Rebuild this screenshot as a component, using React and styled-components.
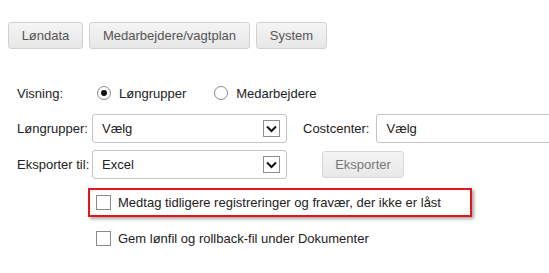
import styled, {createGlobalStyle} from "styled-components";

const GlobalStyle = createGlobalStyle`
  body {
    margin: 0;
    background: #fff;
    font-family: "Liberation Sans", Arial, sans-serif;
    font-size: 13px;
    color: #222;
  }
`

const Page = styled.div`
  width: 549px;
  height: 273px;
  overflow: hidden;
`

const TabBar = styled.div`
  display: flex;
  gap: 6px;
  padding: 22px 0 0 8px;
`

const TabButton = styled.button`
  width: ${({w}) => w}px;
  height: 27px;
  padding: 0;
  border: 1px solid #d2d2d2;
  border-radius: 3px;
  background: linear-gradient(#f5f5f5, #e6e6e6);
  color: #555;
  font-family: inherit;
  font-size: 13px;
`

const Form = styled.div`
  padding: 34px 0 0 17px;
  display: flex;
  flex-direction: column;
  align-items: flex-start;
`

const Row = styled.div`
  display: flex;
  align-items: center;
  height: ${({h}) => h || 29}px;
  margin-top: ${({mt}) => mt || 0}px;
`

const Label = styled.span`
  width: ${({w}) => w || 75}px;
  flex-shrink: 0;
  color: #222;
`

const RadioOption = styled.label`
  display: flex;
  align-items: center;
  gap: 8px;
  margin-left: ${({ml}) => ml || 0}px;
`

const RadioCircle = styled.span`
  width: 12px;
  height: 12px;
  border-radius: 50%;
  border: 1px solid #8a8a8a;
  background: #fff;
  display: flex;
  align-items: center;
  justify-content: center;

  &::after {
    content: "";
    width: 6px;
    height: 6px;
    border-radius: 50%;
    background: ${({checked}) => (checked ? "#111" : "transparent")};
  }
`

const SelectBox = styled.div`
  width: ${({w}) => w}px;
  height: 29px;
  box-sizing: border-box;
  border: 1px solid #c4c4c4;
  border-radius: 3px;
  display: flex;
  align-items: center;
  justify-content: space-between;
  padding: 0 6px 0 9px;
  background: #fff;
  color: #222;
  flex-shrink: 0;
`

const DropArrow = styled.span`
  width: 15px;
  height: 15px;
  border: 1px solid #8f8f8f;
  background: #fff;
  display: flex;
  align-items: center;
  justify-content: center;
`

const InlineLabel = styled.span`
  margin: 0 7px 0 16px;
`

const ActionButton = styled.button`
  margin-left: 35px;
  width: 82px;
  height: 27px;
  padding: 0;
  border: 1px solid #d8d8d8;
  border-radius: 3px;
  background: linear-gradient(#f4f4f4, #e8e8e8);
  color: #777;
  font-family: inherit;
  font-size: 13px;
`

const CheckRow = styled.label`
  display: flex;
  align-items: center;
  gap: 7px;
  box-sizing: border-box;
  margin-left: ${({boxed}) => (boxed ? 71 : 79)}px;
  width: ${({boxed}) => (boxed ? "384px" : "auto")};
  height: 29px;
  padding-left: ${({boxed}) => (boxed ? 6 : 0)}px;
  border: ${({boxed}) => (boxed ? "2px solid #e8141b" : "none")};
  box-shadow: ${({boxed}) => (boxed ? "2px 2px 3px rgba(0,0,0,.35)" : "none")};
  margin-top: ${({mt}) => mt || 0}px;
  color: #222;
`

const CheckBox = styled.span`
  width: 13px;
  height: 13px;
  border: 1px solid #8a8a8a;
  background: #fff;
  flex-shrink: 0;
`

const Chevron = () => (
    <svg width="11" height="8" viewBox="0 0 11 8">
        <path d="M1 1.5 L5.5 6 L10 1.5" fill="none" stroke="#111" strokeWidth="2"/>
    </svg>
)

const Select = ({w, value, arrow = true}) => (
    <SelectBox w={w}>
        <span>{value}</span>
        {arrow && <DropArrow><Chevron/></DropArrow>}
    </SelectBox>
)

const App = () => {
    return (
        <Page>
            <GlobalStyle/>
            <TabBar>
                <TabButton w={75}>Løndata</TabButton>
                <TabButton w={161}>Medarbejdere/vagtplan</TabButton>
                <TabButton w={71}>System</TabButton>
            </TabBar>
            <Form>
                <Row h={20}>
                    <Label w={80}>Visning:</Label>
                    <RadioOption>
                        <RadioCircle checked/>
                        Løngrupper
                    </RadioOption>
                    <RadioOption ml={28}>
                        <RadioCircle/>
                        Medarbejdere
                    </RadioOption>
                </Row>
                <Row mt={11}>
                    <Label>Løngrupper:</Label>
                    <Select w={195} value="Vælg"/>
                    <InlineLabel>Costcenter:</InlineLabel>
                    <Select w={200} value="Vælg" arrow={false}/>
                </Row>
                <Row mt={7}>
                    <Label>Eksporter til:</Label>
                    <Select w={195} value="Excel"/>
                    <ActionButton>Eksporter</ActionButton>
                </Row>
                <CheckRow boxed mt={9}>
                    <CheckBox/>
                    Medtag tidligere registreringer og fravær, der ikke er låst
                </CheckRow>
                <CheckRow mt={7}>
                    <CheckBox/>
                    Gem lønfil og rollback-fil under Dokumenter
                </CheckRow>
            </Form>
        </Page>
    )
}

export default App
